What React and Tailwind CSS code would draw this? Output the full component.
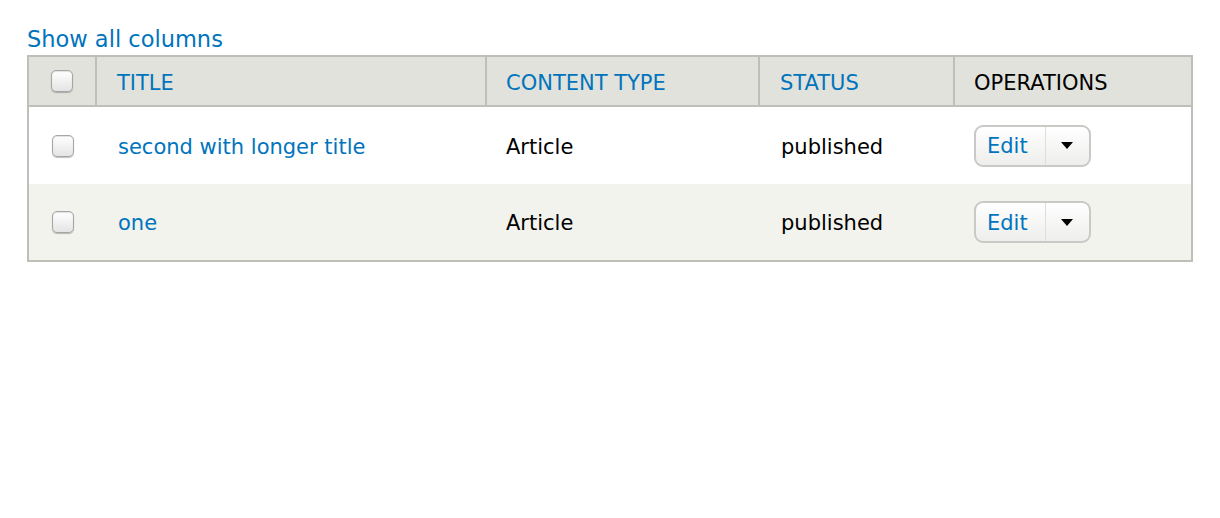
import React from 'react';

const rows = [
  { title: 'second with longer title', type: 'Article', status: 'published' },
  { title: 'one', type: 'Article', status: 'published' },
];

const Checkbox = () => (
  <span className="inline-block w-[22px] h-[22px] rounded-[5px] border border-[#a6a6a6] bg-gradient-to-b from-white to-[#e4e4e4] shadow-[inset_0_1px_1px_rgba(0,0,0,0.12),0_1px_1px_rgba(0,0,0,0.25)] align-middle" />
);

const EditButton = () => (
  <div className="inline-flex items-stretch h-[42px] rounded-[9px] border-2 border-[#c9c9c6] bg-gradient-to-b from-white to-[#eeeeec] overflow-hidden">
    <span className="flex items-center pl-[11px] pr-[17px] pt-[3px] text-[#0074bd]">Edit</span>
    <span className="w-px bg-[#dededc]" />
    <span className="flex items-center justify-center w-[43px]">
      <svg width="12" height="7" viewBox="0 0 12 7">
        <path d="M0 0 L12 0 L6 7 Z" fill="#000" />
      </svg>
    </span>
  </div>
);

const App = () => {
  return (
    <div className="bg-white min-h-screen pt-[26px] pl-[27px] text-[21px] text-black" style={{ fontFamily: '"DejaVu Sans", Verdana, sans-serif' }}>
      <a className="block text-[#0074bd] text-[22.5px] leading-[27px] mb-[2px] w-max">Show all columns</a>

      <table className="w-[1166px] border-2 border-[#bfbfba] border-separate border-spacing-0 table-fixed">
        <colgroup>
          <col className="w-[68px]" />
          <col className="w-[390px]" />
          <col className="w-[273px]" />
          <col className="w-[195px]" />
          <col className="w-[236px]" />
        </colgroup>
        <thead>
          <tr className="bg-[#e1e2dc] h-[50px]">
            <th className="border-r-2 border-b-2 border-[#bfbfba] text-center font-normal">
              <Checkbox />
            </th>
            <th className="border-r-2 border-b-2 border-[#bfbfba] text-left font-normal pl-[20px] pt-[6px] text-[#0074bd]">TITLE</th>
            <th className="border-r-2 border-b-2 border-[#bfbfba] text-left font-normal pl-[19px] pt-[6px] text-[#0074bd]">CONTENT TYPE</th>
            <th className="border-r-2 border-b-2 border-[#bfbfba] text-left font-normal pl-[20px] pt-[6px] text-[#0074bd]">STATUS</th>
            <th className="border-b-2 border-[#bfbfba] text-left font-normal pl-[19px] pt-[6px]">OPERATIONS</th>
          </tr>
        </thead>
        <tbody>
          {rows.map((r, i) => (
            <tr key={i} className={i % 2 === 0 ? 'bg-white h-[77px]' : 'bg-[#f2f3ed] h-[76px]'}>
              <td className="text-center">
                <Checkbox />
              </td>
              <td className="pl-[21px] pt-[4px] text-[#0074bd]">{r.title}</td>
              <td className="pl-[19px] pt-[4px]">{r.type}</td>
              <td className="pl-[21px] pt-[4px]">{r.status}</td>
              <td className="pl-[19px]">
                <EditButton />
              </td>
            </tr>
          ))}
        </tbody>
      </table>
    </div>
  );
};

export default App;
